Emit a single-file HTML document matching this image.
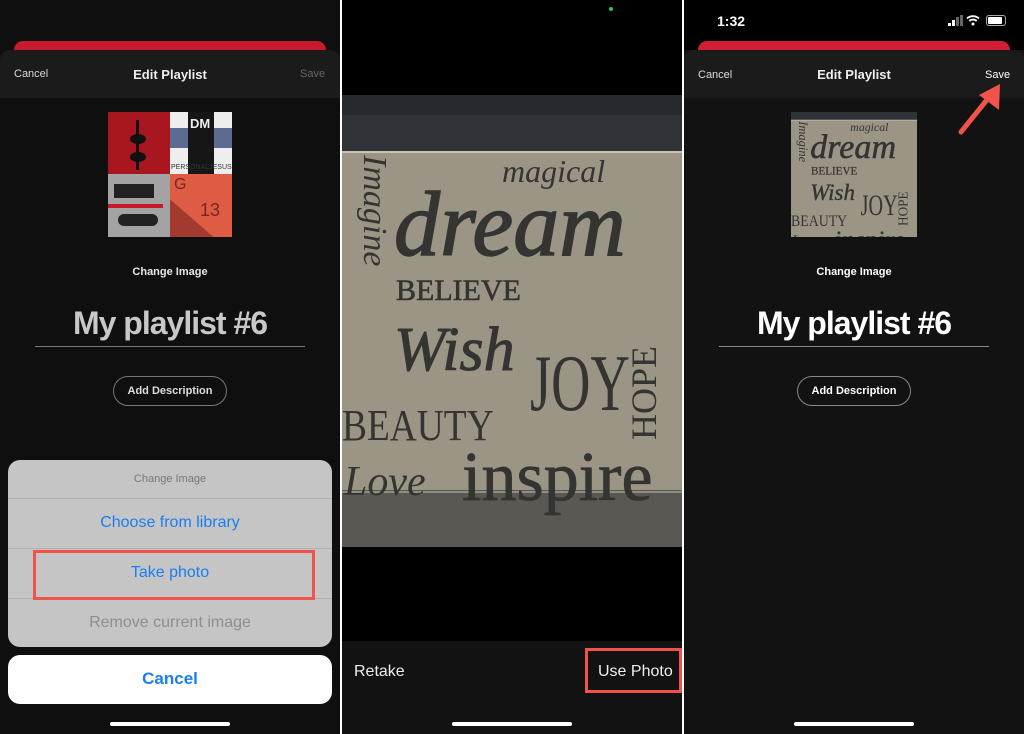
<!DOCTYPE html>
<html><head><meta charset="utf-8"><style>
*{margin:0;padding:0;box-sizing:border-box}
body{width:1024px;height:734px;background:#fff;position:relative;overflow:hidden;font-family:"Liberation Sans",sans-serif}
.p{position:absolute;top:0;height:734px;width:340px;background:#0f0f0f;overflow:hidden}
.a{position:absolute}
.t{position:absolute;white-space:nowrap}
.c{text-align:center;left:0;width:340px}
</style></head><body>

<svg width="0" height="0" style="position:absolute">
<defs>
<g id="photo">
<rect x="0" y="0" width="340" height="452" fill="#2f3237"/>
<rect x="0" y="0" width="340" height="20" fill="#26292d"/>
<rect x="0" y="57" width="340" height="340" fill="#9b9585"/>
<rect x="0" y="395" width="340" height="57" fill="#5a5852"/>
<line x1="0" y1="57" x2="340" y2="57" stroke="#c8c2b4" stroke-width="2"/>
<line x1="0" y1="397" x2="340" y2="397" stroke="#c8c2b4" stroke-width="1"/>
<g fill="#343533" font-family="Liberation Serif,serif">
<text x="160" y="87" font-size="32" font-style="italic">magical</text>
<text x="52" y="160" font-size="92" font-style="italic" stroke="#343533" stroke-width="1.5">dream</text>
<text x="54" y="205" font-size="30" stroke="#343533" stroke-width="0.6">BELIEVE</text>
<text x="52" y="275" font-size="62" font-style="italic" stroke="#343533" stroke-width="1">Wish</text>
<text x="0" y="315" font-size="80" transform="translate(188 0) scale(0.68 1)">JOY</text>
<text x="0" y="345" font-size="44" transform="scale(0.85 1)">BEAUTY</text>
<text x="120" y="405" font-size="70" stroke="#343533" stroke-width="0.8">inspire</text>
<text x="2" y="400" font-size="42" font-style="italic">Love</text>
<text transform="translate(22 60) rotate(90)" font-size="34" font-style="italic">Imagine</text>
<text transform="translate(314 345) rotate(-90)" font-size="36">HOPE</text>
</g>
</g>
</defs>
</svg>

<!-- Panel 1 -->
<div class="p" style="left:0">
 <div class="a" style="left:14px;top:41px;width:312px;height:20px;background:#c8192e;border-radius:9px"></div>
 <div class="a" style="left:0;top:50px;width:340px;height:48px;background:#1b1b1b;border-radius:10px 10px 0 0"></div>
 <div class="t" style="left:14px;top:68px;font-size:11px;color:#d8d8d8">Cancel</div>
 <div class="t c" style="top:67px;font-size:13px;font-weight:bold;color:#eee">Edit Playlist</div>
 <div class="t" style="left:300px;top:68px;font-size:11px;color:#666">Save</div>
 <div class="a" style="left:108px;top:112px;width:124px;height:125px">
  <div class="a" style="left:0;top:0;width:62px;height:62px;background:#a8161f"></div>
  <div class="a" style="left:62px;top:0;width:62px;height:62px;background:#eee"></div>
  <div class="a" style="left:62px;top:16px;width:62px;height:20px;background:#5d6a92"></div>
  <div class="a" style="left:80px;top:0;width:26px;height:62px;background:#161616"></div>
  <div class="t" style="left:82px;top:4px;font-size:13px;color:#eee;font-weight:bold">DM</div>
  <div class="t" style="left:63px;top:52px;font-size:7px;color:#334">PERSONALJESUS</div>
  <div class="a" style="left:28px;top:8px;width:3px;height:50px;background:#111"></div>
  <div class="a" style="left:22px;top:22px;width:16px;height:10px;background:#111;border-radius:50%"></div>
  <div class="a" style="left:22px;top:40px;width:16px;height:10px;background:#111;border-radius:50%"></div>
  <div class="a" style="left:0;top:62px;width:62px;height:63px;background:#a3a3a3"></div>
  <div class="a" style="left:6px;top:72px;width:40px;height:14px;background:#222"></div>
  <div class="a" style="left:0;top:92px;width:55px;height:4px;background:#c8192e"></div>
  <div class="a" style="left:10px;top:102px;width:40px;height:12px;background:#222;border-radius:6px"></div>
  <div class="a" style="left:62px;top:62px;width:62px;height:63px;background:#a33a30"></div>
  <div class="a" style="left:62px;top:62px;width:62px;height:63px;background:#de5b44;clip-path:polygon(0 0,100% 0,100% 100%,70% 100%,0 40%)"></div>
  <div class="t" style="left:66px;top:64px;font-size:16px;color:#7a2520">G</div>
  <div class="t" style="left:92px;top:88px;font-size:18px;color:#7a2520">13</div>
 </div>
 <div class="t c" style="top:266px;font-size:11px;font-weight:bold;color:#e8e8e8">Change Image</div>
 <div class="t c" style="top:305px;font-size:32px;font-weight:bold;color:#c8c8c8;letter-spacing:-1px">My playlist #6</div>
 <div class="a" style="left:35px;top:346px;width:270px;height:1px;background:#777"></div>
 <div class="a" style="left:113px;top:376px;width:114px;height:30px;border:1px solid #777;border-radius:15px"></div>
 <div class="t c" style="top:385px;font-size:11px;font-weight:bold;color:#ddd">Add Description</div>
 <div class="a" style="left:8px;top:460px;width:324px;height:187px;background:#c5c5c5;border-radius:12px"></div>
 <div class="t c" style="top:473px;font-size:11px;color:#777">Change Image</div>
 <div class="a" style="left:8px;top:498px;width:324px;height:1px;background:#b0b0b0"></div>
 <div class="t c" style="top:514px;font-size:16px;color:#1a7ef0">Choose from library</div>
 <div class="a" style="left:8px;top:548px;width:324px;height:1px;background:#b0b0b0"></div>
 <div class="t c" style="top:564px;font-size:16px;color:#1a7ef0">Take photo</div>
 <div class="a" style="left:8px;top:598px;width:324px;height:1px;background:#b0b0b0"></div>
 <div class="t c" style="top:614px;font-size:16px;color:#8e8e8e">Remove current image</div>
 <div class="a" style="left:33px;top:550px;width:282px;height:50px;border:3px solid #f0534a"></div>
 <div class="a" style="left:8px;top:655px;width:324px;height:49px;background:#fff;border-radius:12px"></div>
 <div class="t c" style="top:669px;font-size:17px;font-weight:bold;color:#1a7ef0">Cancel</div>
 <div class="a" style="left:110px;top:722px;width:120px;height:4px;background:#fff;border-radius:2px"></div>
</div>

<!-- Panel 2 -->
<div class="p" style="left:342px;background:#000">
 <div class="a" style="left:267px;top:7px;width:4px;height:4px;background:#2ecc40;border-radius:50%"></div>
 <svg class="a" style="left:0;top:95px" width="340" height="452" viewBox="0 0 340 452"><use href="#photo"/></svg>
 <div class="a" style="left:0;top:641px;width:340px;height:93px;background:#121212"></div>
 <div class="t" style="left:12px;top:663px;font-size:16px;color:#eee">Retake</div>
 <div class="t" style="left:256px;top:663px;font-size:16px;color:#eee">Use Photo</div>
 <div class="a" style="left:243px;top:648px;width:97px;height:45px;border:3px solid #f0534a"></div>
 <div class="a" style="left:110px;top:722px;width:120px;height:4px;background:#fff;border-radius:2px"></div>
</div>

<!-- Panel 3 -->
<div class="p" style="left:684px;background:#121212">
 <div class="a" style="left:0;top:0;width:340px;height:50px;background:#000"></div>
 <div class="t" style="left:33px;top:13px;font-size:14px;font-weight:bold;color:#fff">1:32</div>
 <div class="a" style="left:264px;top:23px;width:3px;height:3px;background:#fff"></div>
 <div class="a" style="left:268px;top:20px;width:3px;height:6px;background:#fff"></div>
 <div class="a" style="left:272px;top:17px;width:3px;height:9px;background:#666"></div>
 <div class="a" style="left:276px;top:15px;width:3px;height:11px;background:#666"></div>
 <svg class="a" style="left:282px;top:14px" width="14" height="12" viewBox="0 0 14 12"><path d="M1 4.5a9 9 0 0 1 12 0M3.3 7a5.5 5.5 0 0 1 7.4 0" stroke="#fff" stroke-width="1.8" fill="none"/><circle cx="7" cy="10" r="1.5" fill="#fff"/></svg>
 <div class="a" style="left:302px;top:15px;width:20px;height:11px;border:1px solid #aaa;border-radius:3px;padding:1px"><div style="width:14px;height:7px;background:#fff;border-radius:1px"></div></div>
 <div class="a" style="left:14px;top:41px;width:312px;height:20px;background:#d11e35;border-radius:9px"></div>
 <div class="a" style="left:0;top:50px;width:340px;height:48px;background:#1b1b1b;border-radius:10px 10px 0 0"></div>
 <div class="t" style="left:14px;top:69px;font-size:11px;color:#ddd">Cancel</div>
 <div class="t c" style="top:67px;font-size:13px;font-weight:bold;color:#eee">Edit Playlist</div>
 <div class="t" style="left:301px;top:69px;font-size:11px;color:#fff">Save</div>
 <svg class="a" style="left:107px;top:112px" width="126" height="125" viewBox="0 35 340 340" preserveAspectRatio="none"><use href="#photo"/></svg>
 <div class="t c" style="top:266px;font-size:11px;font-weight:bold;color:#fff">Change Image</div>
 <div class="t c" style="top:305px;font-size:32px;font-weight:bold;color:#fff;letter-spacing:-1px">My playlist #6</div>
 <div class="a" style="left:35px;top:346px;width:270px;height:1px;background:#888"></div>
 <div class="a" style="left:113px;top:376px;width:114px;height:30px;border:1px solid #888;border-radius:15px"></div>
 <div class="t c" style="top:385px;font-size:11px;font-weight:bold;color:#fff">Add Description</div>
 <svg class="a" style="left:270px;top:80px" width="60" height="60" viewBox="0 0 60 60"><line x1="7" y1="52" x2="36" y2="16" stroke="#f0534a" stroke-width="5" stroke-linecap="round"/><path d="M46 4 L45 30 L25 15 Z" fill="#f0534a"/></svg>
 <div class="a" style="left:110px;top:722px;width:120px;height:4px;background:#fff;border-radius:2px"></div>
</div>
</body></html>
